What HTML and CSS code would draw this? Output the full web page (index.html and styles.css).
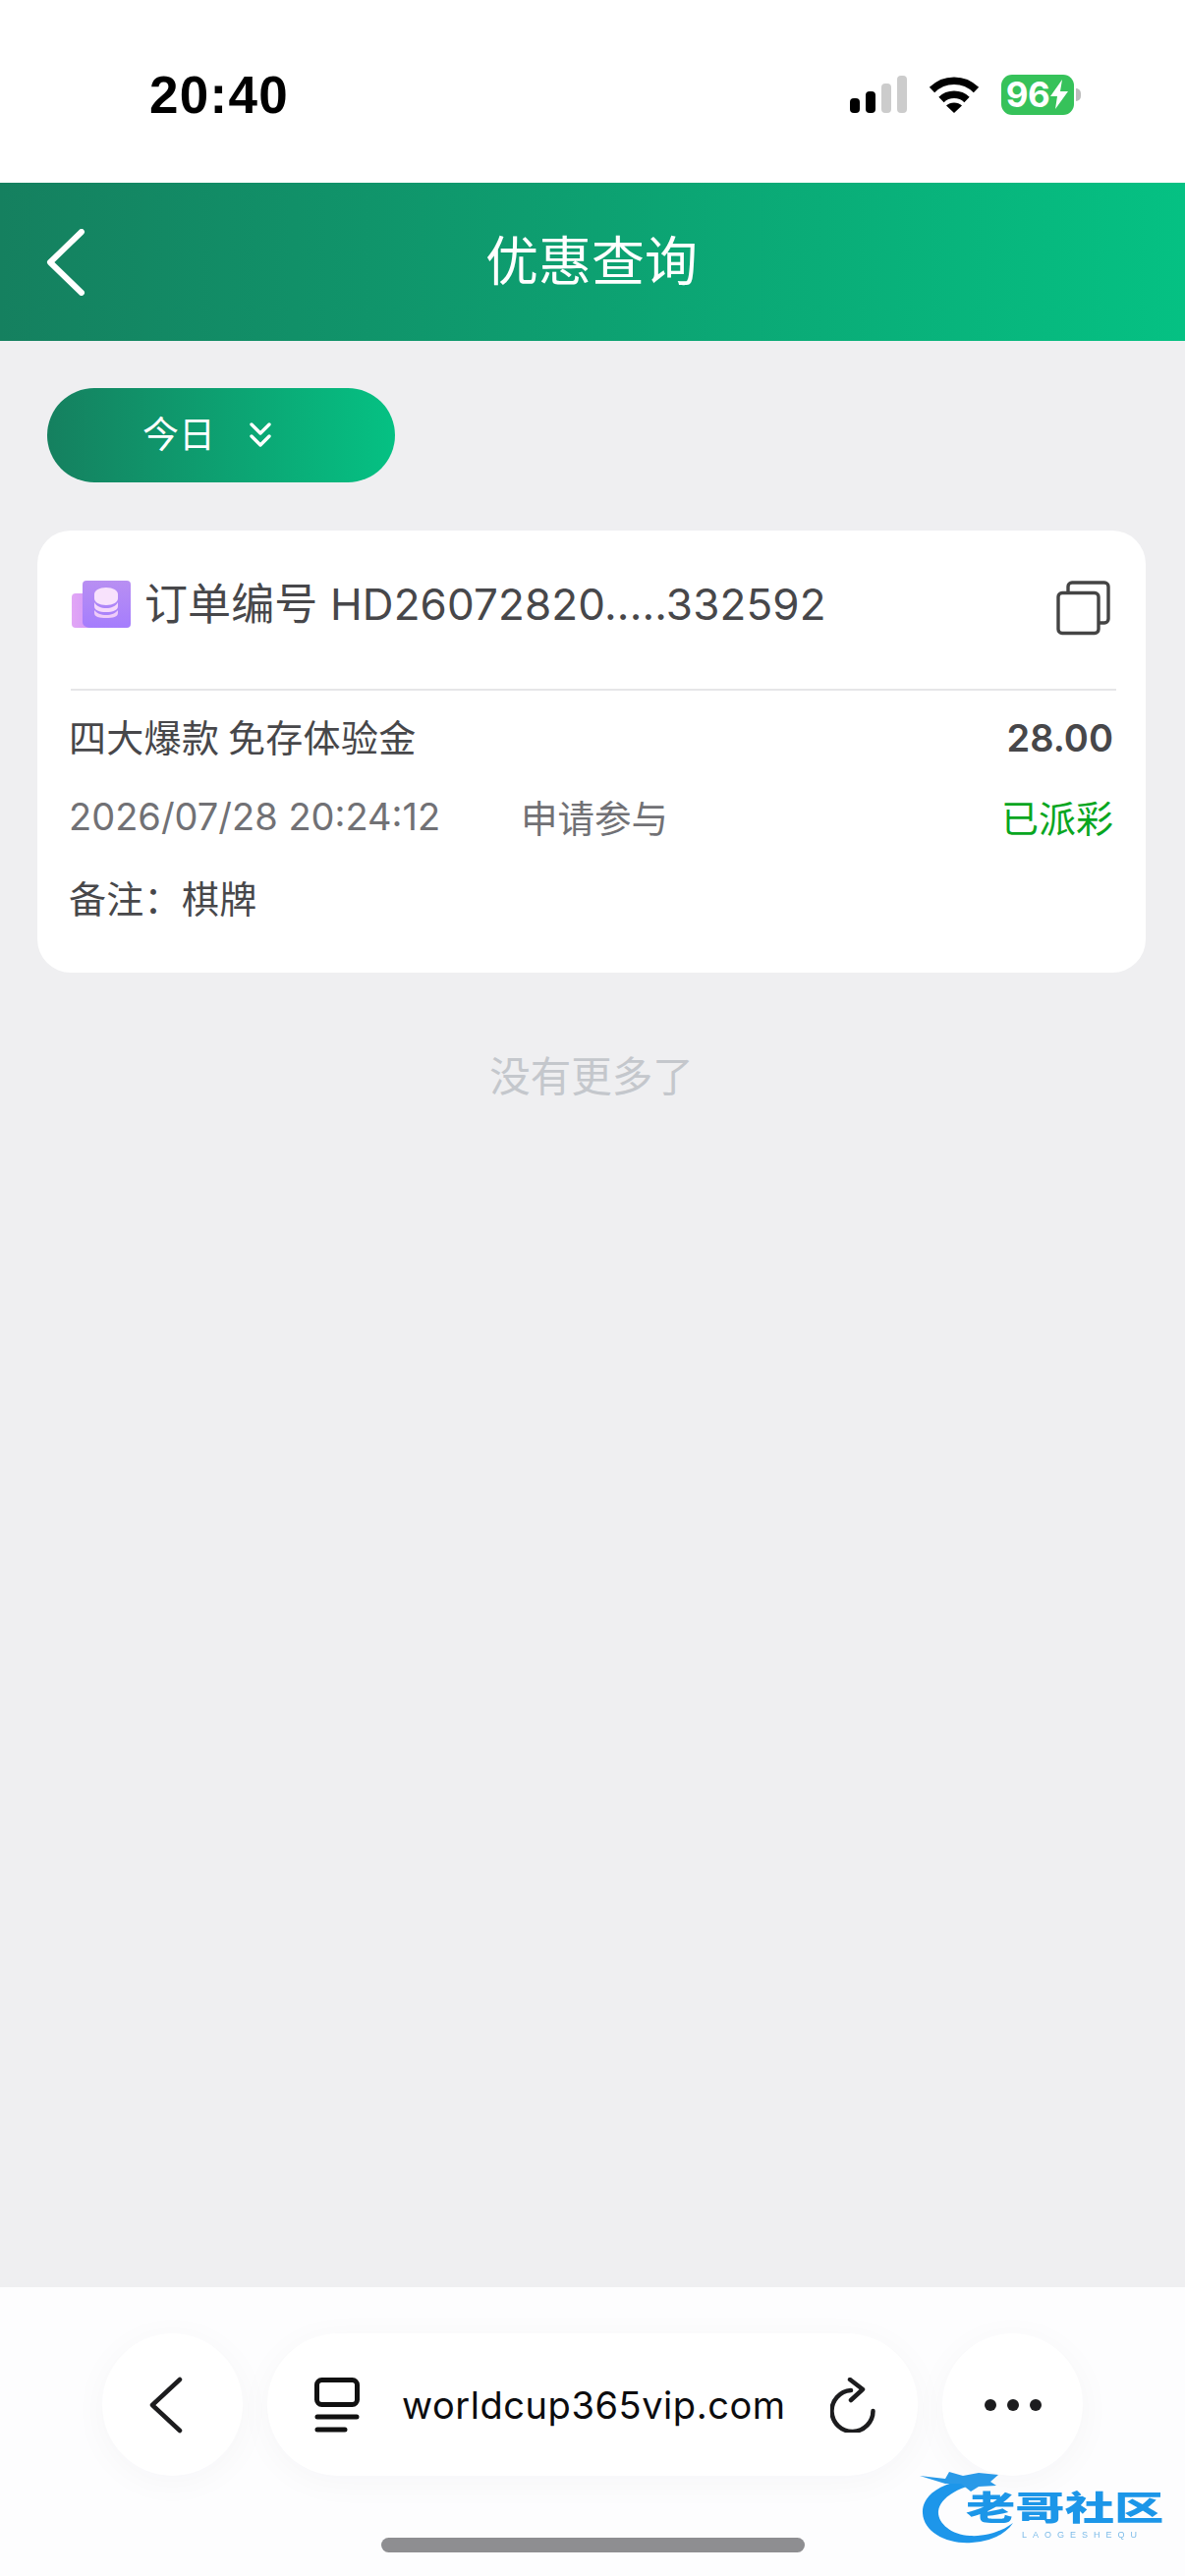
FILE: index.html
```html
<!DOCTYPE html>
<html lang="zh-CN">
<head>
<meta charset="utf-8">
<title>优惠查询</title>
<link rel="stylesheet" href="styles.css">
</head>
<body>
<div class="screen">
  <div class="status">
    <span class="time">20:40</span>
    <div class="status-icons">
      <svg class="sig" width="58" height="38" viewBox="0 0 58 38"><rect x="0" y="23" width="10" height="15" rx="4" fill="#000"/><rect x="16" y="16" width="10" height="22" rx="4" fill="#000"/><rect x="32" y="8" width="10" height="30" rx="4" fill="#ccc"/><rect x="48" y="0" width="10" height="38" rx="4" fill="#ccc"/></svg>
      <svg class="wifi" width="52" height="38" viewBox="0 0 52 38"><path d="M3.5 14.5C16 2 36 2 48.5 14.5" fill="none" stroke="#000" stroke-width="7.5"/><path d="M13 24.5C20 17.5 32 17.5 39 24.5" fill="none" stroke="#000" stroke-width="7.5"/><path d="M18 30.5C22 26.5 30 26.5 34 30.5L26 38Z" fill="#000"/></svg>
      <div class="battery"><span class="batt-body"><span class="batt-num">96</span><svg width="20" height="30" viewBox="0 0 20 30"><path d="M13 0 1 17h7L6 30 19 12h-8Z" fill="#fff"/></svg></span><span class="batt-nub"></span></div>
    </div>
  </div>
  <header class="nav">
    <svg class="nav-back" width="40" height="68" viewBox="0 0 40 68"><path d="M36 3 4 34 36 65" fill="none" stroke="#fff" stroke-width="6" stroke-linecap="round" stroke-linejoin="round"/></svg>
    <h1 class="nav-title">优惠查询</h1>
  </header>
  <main class="content">
    <div class="pill">
      <span class="pill-text">今日</span>
      <svg width="22" height="26" viewBox="0 0 22 26"><path d="M2 2l9 9 9-9M2 14l9 9 9-9" fill="none" stroke="#fff" stroke-width="3.4" stroke-linecap="round" stroke-linejoin="round"/></svg>
    </div>
    <section class="card">
      <div class="card-head">
        <svg class="coin" width="60" height="48" viewBox="0 0 60 48"><defs><linearGradient id="cg" x1="0" y1="0" x2="0" y2="1"><stop offset="0" stop-color="#b88ff2"/><stop offset="1" stop-color="#a57dfd"/></linearGradient><linearGradient id="cb" x1="0" y1="0" x2="1" y2="0"><stop offset="0" stop-color="#e2a6f6"/><stop offset="1" stop-color="#c48cf8"/></linearGradient></defs><rect x="0" y="13" width="40" height="35" rx="4" fill="url(#cb)"/><path d="M15 0h41a4 4 0 0 1 4 4v40a4 4 0 0 1-4 4H20c-5 0-9-2-9-6V4a4 4 0 0 1 4-4Z" fill="url(#cg)"/><path d="M23 14c0-4 5-7 12-7s12 3 12 7v4c0 4-5 7-12 7s-12-3-12-7Z" fill="#f8e2fc"/><path d="M23 22c2 4 7 6 12 6s10-2 12-6v4c0 4-5 6-12 6s-12-2-12-6Z" fill="#f5d8fb"/><path d="M23 30c2 3 7 5 12 5s10-2 12-5v3c0 4-5 5-12 5s-12-1-12-5Z" fill="#efccf9"/></svg>
        <span class="order">订单编号 HD26072820.....332592</span>
        <svg class="copy" width="56" height="56" viewBox="0 0 56 56"><path d="M12 12V6a4 4 0 0 1 4-4h33a4 4 0 0 1 4 4v33a4 4 0 0 1-4 4h-6" fill="none" stroke="#444" stroke-width="3.4"/><rect x="2" y="12.500" width="41" height="41" rx="4" fill="#fff" stroke="#444" stroke-width="3.4"/></svg>
      </div>
      <div class="row"><span class="name">四大爆款 免存体验金</span><span class="amount">28.00</span></div>
      <div class="row"><span class="meta"><span class="date">2026/07/28 20:24:12</span><span class="apply">申请参与</span></span><span class="state">已派彩</span></div>
      <div class="row"><span class="name">备注：棋牌</span></div>
    </section>
    <p class="end">没有更多了</p>
  </main>
  <footer class="browser">
    <div class="tools">
      <div class="round">
        <svg class="tool-back" width="34" height="58" viewBox="0 0 34 58"><path d="M31 3 3 29l28 26" fill="none" stroke="#1c1c1e" stroke-width="4.500" stroke-linecap="round" stroke-linejoin="round"/></svg>
      </div>
      <div class="url">
        <svg width="46" height="56" viewBox="0 0 46 56"><rect x="2.500" y="2.500" width="41" height="25" rx="5" fill="none" stroke="#111" stroke-width="5"/><path d="M3 40h40M3 53h28" stroke="#111" stroke-width="5" stroke-linecap="round"/></svg>
        <span class="domain">worldcup365vip.com</span>
        <svg width="46" height="56" viewBox="0 0 46 56"><path d="M21 13A21 21 0 1 0 43.500 34" fill="none" stroke="#1c1c1e" stroke-width="4.500" stroke-linecap="round"/><path d="M20 2 33 12 21 23" fill="none" stroke="#1c1c1e" stroke-width="4.500" stroke-linecap="round" stroke-linejoin="round"/></svg>
      </div>
      <div class="round">
        <svg width="58" height="14" viewBox="0 0 58 14"><circle cx="6" cy="7" r="6" fill="#1c1c1e"/><circle cx="29" cy="7" r="6" fill="#1c1c1e"/><circle cx="52" cy="7" r="6" fill="#1c1c1e"/></svg>
      </div>
    </div>
    <div class="home"></div>
    <div class="mark">
      <svg class="dragon" width="110" height="78" viewBox="0 0 110 78"><path d="M48 10C18 14 2 28 3 44c1 20 26 32 50 30 18-1 34-8 42-20-12 9-28 14-44 13C32 66 18 54 19 42c1-10 12-20 32-26Z" fill="#1d96ea"/><path d="M0 6 26 9 30 2 44 6 60 3 80 5 72 12 78 16 60 17 52 22 42 14 26 14Z" fill="#2a9ae8"/></svg>
      <span class="mark-cn">老哥社区</span>
      <span class="mark-en">LAOGESHEQU</span>
    </div>
  </footer>
</div>
</body>
</html>
```

FILE: styles.css
```css
* { box-sizing: border-box; }
html, body { margin: 0; padding: 0; }
body { font-family: "Inter", "Noto Sans CJK SC", sans-serif; background: #efeff1; }
.screen { width: 1206px; height: 2622px; display: flex; flex-direction: column; overflow: hidden; position: relative; }

.status { height: 186px; background: #fff; display: flex; align-items: center; justify-content: space-between; padding: 6px 106px 0 152px; flex: none; }
.time { font-family: "Liberation Sans", sans-serif; font-weight: 700; font-size: 53px; color: #000; letter-spacing: 1.3px; line-height: 1; }
.status-icons { display: flex; align-items: center; gap: 22px; }
.battery { display: flex; align-items: center; gap: 2px; }
.batt-body { width: 74px; height: 41px; border-radius: 11px; background: #36c25a; display: flex; align-items: center; justify-content: center; gap: 0; }
.batt-num { font-family: "Inter", sans-serif; font-weight: 700; font-size: 35px; letter-spacing: -0.5px; color: #fff; line-height: 1; }
.batt-nub { width: 5px; height: 13px; background: #bdbdbd; border-radius: 0 5px 5px 0; }

.nav { height: 161px; flex: none; position: relative; display: flex; align-items: center; justify-content: center; padding-bottom: 8px; background: linear-gradient(90deg, #15805f 0%, #05c183 100%); }
.nav-back { position: absolute; left: 47px; top: 47px; }
.nav-title { margin: 0 2px 0 0; font-family: "Noto Sans CJK SC", sans-serif; font-weight: 400; font-size: 54px; color: #fff; line-height: 1; }

.content { flex: 1; display: flex; flex-direction: column; align-items: flex-start; padding: 48px 40px 0 38px; }
.pill { width: 354px; height: 96px; margin-left: 10px; border-radius: 48px; background: linear-gradient(90deg, #15805f 0%, #05c183 100%); display: flex; align-items: center; justify-content: flex-start; padding-left: 97px; gap: 35px; color: #fff; font-size: 37px; font-family: "Noto Sans CJK SC", sans-serif; line-height: 1; }
.pill-text { margin-bottom: 6px; }

.card { width: 1128px; height: 450px; margin-top: 49px; background: #fff; border-radius: 34px; padding: 0 30px 0 34px; display: flex; flex-direction: column; }
.card-head { height: 163px; border-bottom: 2px solid #e6e6e8; display: flex; align-items: center; padding-bottom: 11px; padding-right: 5px; }
.coin { flex: none; margin-left: 1px; }
.order { flex: 1; margin-left: 14px; font-size: 44px; letter-spacing: 0.12px; color: #47474a; font-family: "Inter", "Noto Sans CJK SC", sans-serif; white-space: nowrap; line-height: 1; }
.copy { flex: none; margin-top: 8px; }
.row { height: 82px; margin-left: -2px; padding-bottom: 4px; display: flex; align-items: center; justify-content: space-between; flex: none; font-size: 38px; line-height: 1; }
.row:nth-child(2) { margin-top: 7px; }
.name { color: #47474a; letter-spacing: 0.3px; font-family: "Noto Sans CJK SC", sans-serif; }
.amount { font-weight: 600; color: #47474a; font-size: 38px; margin: 4px 3px 0 0; }
.meta { display: flex; align-items: center; }
.date { color: #717175; width: 460px; font-family: "Inter", sans-serif; }
.apply { color: #717175; font-size: 37.5px; font-family: "Noto Sans CJK SC", sans-serif; }
.state { color: #08a61f; font-family: "Noto Sans CJK SC", sans-serif; margin-right: 3px; }

.end { align-self: center; margin: 79px 0 0 0; font-family: "Noto Sans CJK SC", sans-serif; font-size: 41.5px; line-height: 1.2; color: #c4c7cc; }

.browser { height: 294px; flex: none; background: #fdfdfe; position: relative; padding-top: 47px; display: flex; flex-direction: column; align-items: center; }
.tools { display: flex; gap: 25px; height: 145px; align-items: stretch; width: 998px; }
.round { width: 143px; border-radius: 50%; background: #fff; box-shadow: 0 6px 36px rgba(40,40,70,.035); display: flex; align-items: center; justify-content: center; }
.tool-back { margin-right: 14px; }
.url { width: 662px; border-radius: 72px; background: #fff; box-shadow: 0 6px 36px rgba(40,40,70,.035); display: flex; align-items: center; padding-left: 48px; gap: 43px; }
.domain { font-family: "Inter", sans-serif; font-size: 38px; color: #0c0c0e; letter-spacing: 0.55px; white-space: nowrap; width: 393px; line-height: 1; }
.home { width: 431px; height: 15px; margin-top: 63px; border-radius: 8px; background: #8e8e91; }

.mark { position: absolute; left: 936px; top: 186px; width: 256px; height: 78px; filter: blur(0.7px); }
.dragon { position: absolute; left: 0; top: 0; }
.mark-cn { position: absolute; left: 47px; top: 20px; font-family: "Noto Sans CJK SC", sans-serif; font-weight: 900; font-size: 34px; line-height: 1; color: #1c96e8; white-space: nowrap; transform: scaleX(1.48); transform-origin: left center; }
.mark-en { position: absolute; left: 104px; top: 62px; font-family: "Liberation Sans", sans-serif; font-size: 9px; letter-spacing: 6px; color: #7dbbe8; line-height: 1; white-space: nowrap; }
```
